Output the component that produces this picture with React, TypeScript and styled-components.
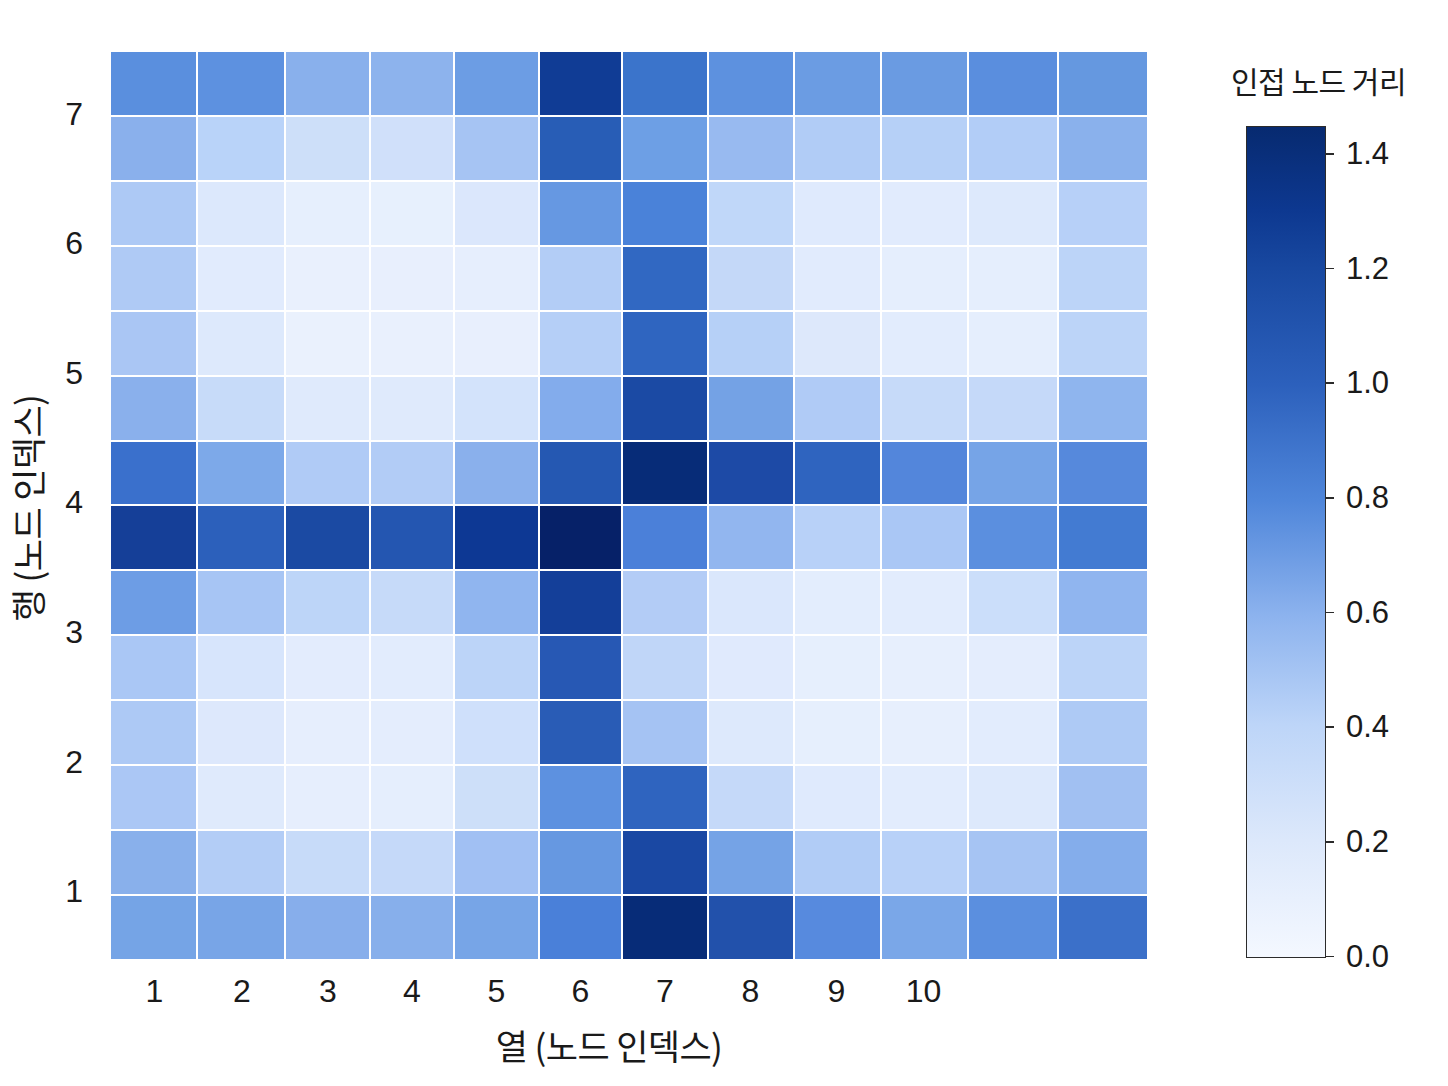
import styled, { createGlobalStyle } from "styled-components";

const GlobalStyle = createGlobalStyle`
    html, body {
        margin: 0;
        padding: 0;
        background: #ffffff;
    }
    body {
        font-family: "Liberation Sans", "Noto Sans CJK KR", Arial, sans-serif;
        color: #1a1a1a;
    }
`;

// cell colours, top row first (as read from the figure)
const cells: string[][] = [
    ["#5a8fde", "#5d91e0", "#89b0ec", "#8db3ed", "#6c9de4", "#103c95", "#3b74cb", "#5d91df", "#6b9ce3", "#6a9be2", "#5a8ede", "#6598e0"],
    ["#8ab0ec", "#b9d3f9", "#cddff9", "#d0e0fa", "#a6c4f3", "#285db6", "#6d9fe5", "#98baf0", "#b1ccf6", "#b6d0f7", "#b2cdf7", "#8ab1ec"],
    ["#adc9f5", "#dce8fc", "#e6effd", "#e7f0fd", "#dbe7fc", "#6698e2", "#4a82d9", "#c0d7f9", "#dfeafd", "#e1ebfd", "#dde9fc", "#b7d0f8"],
    ["#afcaf5", "#e1ebfd", "#e9f0fd", "#e8effd", "#e6eefd", "#b3cdf6", "#3168c2", "#c4d8f8", "#e1ebfd", "#e5eefd", "#e5eefd", "#bcd4f8"],
    ["#aac6f4", "#dde9fc", "#eaf1fd", "#e9f0fd", "#e8effd", "#b5cff7", "#2f65c0", "#b6d0f7", "#dde8fb", "#e2ecfd", "#e5eefd", "#bcd4f8"],
    ["#8ab0ec", "#c7dbf9", "#dfeafc", "#dfeafc", "#d3e3fb", "#83acec", "#1b4aa4", "#74a2e5", "#b0cbf6", "#c6daf9", "#c5d9f9", "#8fb5ee"],
    ["#3a70cc", "#7da9e9", "#b0cbf6", "#b2ccf6", "#8ab0ec", "#2558b2", "#072c78", "#1d4aa6", "#2f64bf", "#5386db", "#76a4e7", "#5689dc"],
    ["#153f98", "#2c60bb", "#1b4aa3", "#2456b1", "#0d3894", "#062168", "#4b80d9", "#92b6ef", "#b8d1f8", "#aac7f5", "#5b8fdf", "#437bd2"],
    ["#6d9de5", "#a7c5f4", "#bdd5f8", "#c6daf9", "#90b5ef", "#143f99", "#b3ccf6", "#dae7fc", "#e3edfd", "#e2ecfd", "#cbdefa", "#90b5ef"],
    ["#aac7f5", "#d7e5fc", "#e3ecfd", "#e2ecfd", "#bcd4f8", "#2758b4", "#c0d6f8", "#e0eafd", "#e6effd", "#e7effd", "#e4edfd", "#bcd4f8"],
    ["#adc9f5", "#dde8fc", "#e6eefd", "#e4edfd", "#cfe0fb", "#295cb6", "#a5c3f3", "#dde9fc", "#e6effd", "#e7effd", "#e2ecfd", "#aecaf5"],
    ["#abc7f5", "#dfeafc", "#e6eefd", "#e5eefd", "#cddff9", "#5d91e0", "#2f64bf", "#c5d9f9", "#dfeafd", "#e2ecfd", "#dde9fc", "#a1c0f2"],
    ["#89b0eb", "#b3cdf6", "#c7dbf9", "#c5d9f9", "#a1c0f3", "#6698e1", "#1a48a3", "#75a3e6", "#b1ccf6", "#b8d1f8", "#a6c4f3", "#84adeb"],
    ["#75a4e6", "#78a5e7", "#87aeeb", "#87afeb", "#77a5e7", "#4a80d9", "#072c78", "#2251ab", "#578ade", "#7aa7e8", "#5b8fdf", "#3b70c9"],
];

// column widths measured on the figure (px)
const colWidths = [87, 88, 84, 84, 85, 83, 86, 85, 87, 87, 90, 90];
const colTemplate = colWidths.map((w) => `${w}fr`).join(" ");

const rowTicks = ["7", "6", "5", "4", "3", "2", "1"];
const colTicks = ["1", "2", "3", "4", "5", "6", "7", "8", "9", "10", "", ""];
const barTicks = ["1.4", "1.2", "1.0", "0.8", "0.6", "0.4", "0.2", "0.0"];

//styled-components
const Page = styled.div`
    display: flex;
    align-items: flex-start;
    width: 1448px;
    height: 1086px;
    padding-top: 52px;
    box-sizing: border-box;
    overflow: hidden;
`;

const YTitleColumn = styled.div`
    width: 54px;
    height: 907px;
    display: flex;
    align-items: center;
    justify-content: center;
`;

const YTitle = styled.div`
    transform: rotate(-90deg) translateX(-2px);
    white-space: nowrap;
    font-size: 35px;
    line-height: 38px;
    font-family: "Noto Sans CJK KR", "Liberation Sans", sans-serif;
    letter-spacing: -0.6px;
`;

const YTicks = styled.div`
    width: 57px;
    height: 907px;
    display: grid;
    grid-template-rows: repeat(7, 1fr);
    box-sizing: border-box;
    padding-right: 28px;
    margin-top: -3px;
`;

const TickLabel = styled.div<{ $align?: string }>`
    display: flex;
    align-items: center;
    justify-content: ${(p) => p.$align || "center"};
    font-size: 32px;
    line-height: 36px;
`;

const PlotColumn = styled.div`
    width: 1036px;
    display: flex;
    flex-direction: column;
`;

const Heatmap = styled.div`
    display: grid;
    grid-template-columns: ${colTemplate};
    grid-template-rows: repeat(14, 1fr);
    gap: 2px;
    width: 1036px;
    height: 907px;
    background: #ffffff;
`;

const Cell = styled.div<{ $color: string }>`
    background: ${(p) => p.$color};
`;

const XTicks = styled.div`
    display: grid;
    grid-template-columns: ${colTemplate};
    height: 64px;
`;

const XTitle = styled.div`
    text-align: center;
    padding-right: 40px;
    margin-top: 2px;
    font-size: 35px;
    line-height: 40px;
    font-family: "Noto Sans CJK KR", "Liberation Sans", sans-serif;
    letter-spacing: -0.6px;
`;

const LegendColumn = styled.div`
    margin-left: 99px;
    display: flex;
    flex-direction: column;
`;

const LegendTitle = styled.div`
    margin-top: 10px;
    margin-left: -15px;
    white-space: nowrap;
    font-size: 30px;
    line-height: 36px;
    font-family: "Noto Sans CJK KR", "Liberation Sans", sans-serif;
    letter-spacing: -0.5px;
`;

const BarRow = styled.div`
    display: flex;
    margin-top: 28px;
`;

const ColorBar = styled.div`
    width: 80px;
    height: 832px;
    border: 1px solid #2b2b2b;
    box-sizing: border-box;
    background: linear-gradient(
        to bottom,
        #072a70 0%,
        #0d3890 10%,
        #1848a0 17%,
        #2c60bc 31%,
        #4f86da 45%,
        #8db3ee 59%,
        #bdd5f8 72%,
        #dce8fb 86%,
        #f4f8ff 100%
    );
`;

const BarTicks = styled.div`
    height: 832px;
    display: flex;
    flex-direction: column;
    padding-top: 28px;
    box-sizing: border-box;
`;

const BarTick = styled.div`
    flex: 0 0 114.7px;
    height: 114.7px;
    display: flex;
    align-items: flex-start;
    transform: translateY(-1px);
`;

const TickMark = styled.span`
    width: 8px;
    height: 1.5px;
    background: #2b2b2b;
`;

const BarTickText = styled.span`
    margin-left: 12px;
    margin-top: -16px;
    font-size: 31px;
    line-height: 34px;
`;

//Components
const App = () => {
    return (
        <>
            <GlobalStyle />
            <Page>
                <YTitleColumn>
                    <YTitle>행 (노드 인덱스)</YTitle>
                </YTitleColumn>
                <YTicks>
                    {rowTicks.map((t) => (
                        <TickLabel key={t} $align="flex-end">
                            {t}
                        </TickLabel>
                    ))}
                </YTicks>
                <PlotColumn>
                    <Heatmap>
                        {cells.map((row, r) =>
                            row.map((c, i) => <Cell key={`${r}-${i}`} $color={c} />)
                        )}
                    </Heatmap>
                    <XTicks>
                        {colTicks.map((t, i) => (
                            <TickLabel key={i}>{t}</TickLabel>
                        ))}
                    </XTicks>
                    <XTitle>열 (노드 인덱스)</XTitle>
                </PlotColumn>
                <LegendColumn>
                    <LegendTitle>인접 노드 거리</LegendTitle>
                    <BarRow>
                        <ColorBar />
                        <BarTicks>
                            {barTicks.map((t) => (
                                <BarTick key={t}>
                                    <TickMark />
                                    <BarTickText>{t}</BarTickText>
                                </BarTick>
                            ))}
                        </BarTicks>
                    </BarRow>
                </LegendColumn>
            </Page>
        </>
    );
};

export default App;
